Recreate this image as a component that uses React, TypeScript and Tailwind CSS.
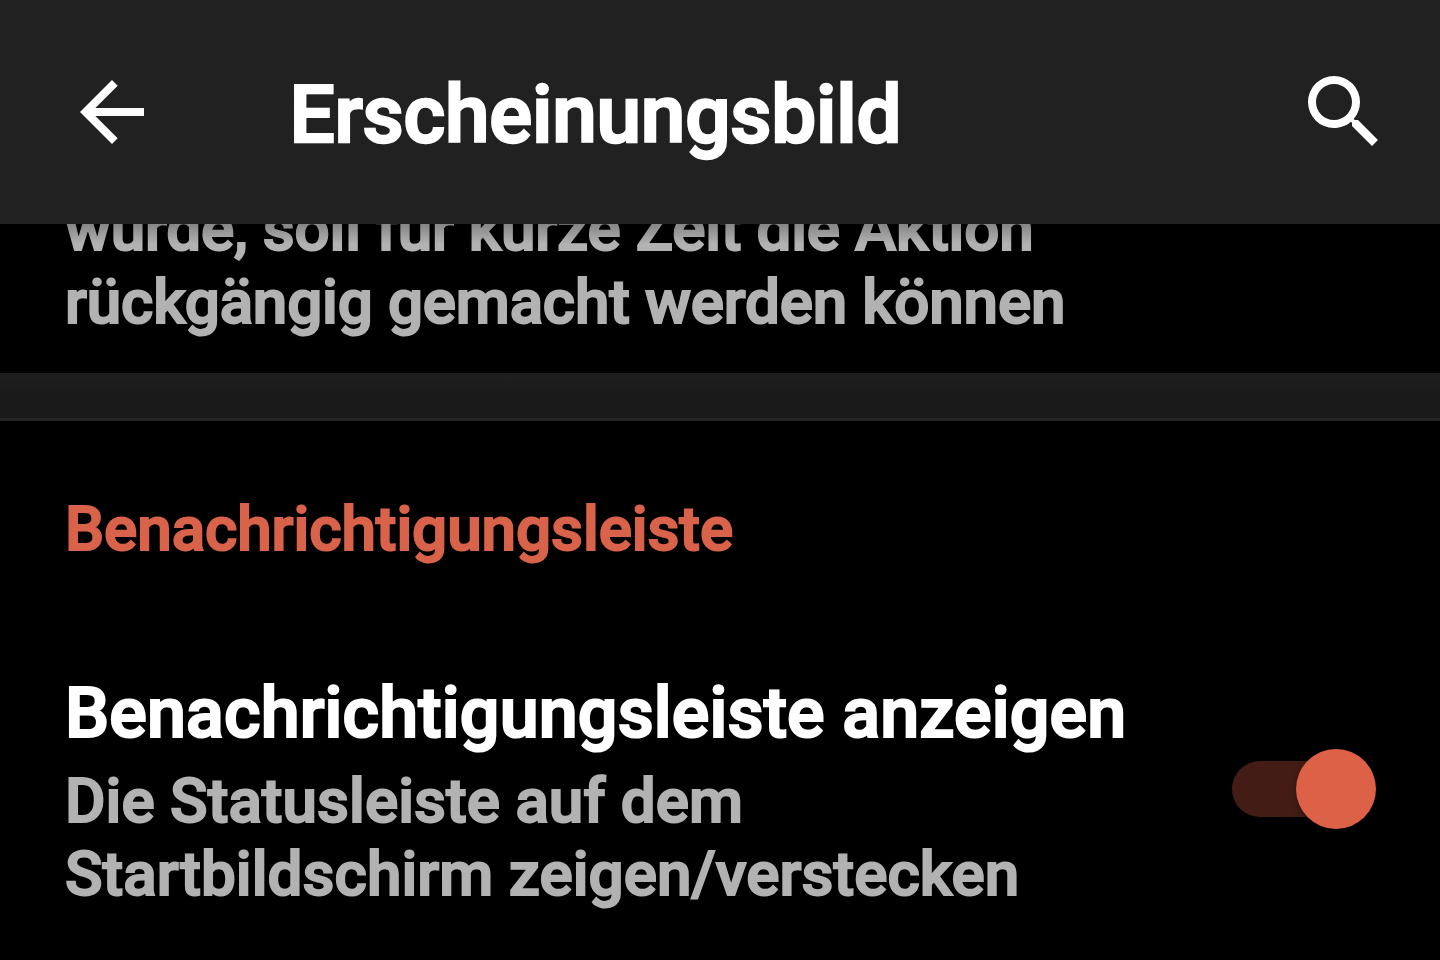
import React, { useState } from 'react';
import { Switch } from '@headlessui/react';
import { MdArrowBack, MdSearch } from 'react-icons/md';

export default function App() {
  const [showBar, setShowBar] = useState(true);

  return (
    <div className="flex flex-col w-[1440px] h-[960px] overflow-hidden bg-black font-[Roboto,sans-serif] font-medium">
      <header className="flex items-center h-[224px] shrink-0 pl-16 pr-12 bg-[#212121] text-white">
        <button aria-label="Zurück">
          <MdArrowBack size={96} />
        </button>
        <h1 className="flex-1 pl-[129.5px] pt-1.5 text-[80px] leading-none tracking-[-0.2px] [-webkit-text-stroke-width:2.5px]">
          Erscheinungsbild
        </h1>
        <button aria-label="Suchen">
          <MdSearch size={96} />
        </button>
      </header>

      <section className="relative flex flex-col justify-end h-[149px] shrink-0 overflow-hidden px-[65px] pb-[35px]">
        <p className="text-[62px] leading-[73px] tracking-[-0.2px] text-[#b2b2b2] whitespace-nowrap [-webkit-text-stroke-width:1.94px]">
          wurde, soll für kurze Zeit die Aktion
          <br />
          rückgängig gemacht werden können
        </p>
        {/* header shadow */}
        <div className="absolute inset-x-0 top-0 h-5 bg-linear-to-b from-black/25 to-transparent" />
      </section>

      <div className="h-12 shrink-0 bg-linear-to-b from-[#1f1f1f] to-[#1a1a1a] to-50% border-b-3 border-[#242424]" />

      <section className="flex flex-col pl-[65px] pr-16">
        <h2 className="pt-[71px] text-[62px] leading-[73px] tracking-[-0.08px] text-[#d9634a] [-webkit-text-stroke-width:1.94px]">
          Benachrichtigungsleiste
        </h2>
        <div className="flex items-center justify-between pt-[107px]">
          <div className="whitespace-nowrap">
            <h3 className="text-[70px] leading-[82px] tracking-[0.15px] text-white [-webkit-text-stroke-width:2.19px]">
              Benachrichtigungsleiste anzeigen
            </h3>
            <p className="pt-2.5 text-[62px] leading-[73px] tracking-[0.05px] text-[#b2b2b2] [-webkit-text-stroke-width:1.94px]">
              Die Statusleiste auf dem
              <br />
              Startbildschirm zeigen/verstecken
            </p>
          </div>
          <Switch
            checked={showBar}
            onChange={setShowBar}
            className="group flex items-center w-36 h-20 mb-1 shrink-0"
          >
            <span className="flex items-center w-28 h-14 rounded-full bg-[#431d15]">
              <span className="size-20 shrink-0 rounded-full bg-[#dc6146] shadow-[0_2px_6px_rgba(0,0,0,0.4)] group-data-checked:translate-x-16" />
            </span>
          </Switch>
        </div>
      </section>
    </div>
  );
}
